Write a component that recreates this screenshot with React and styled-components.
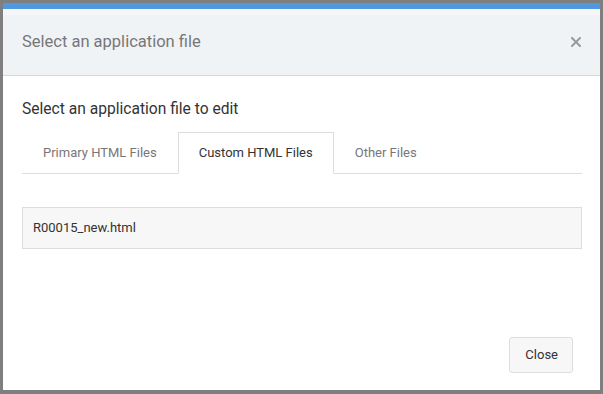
import React, { useState } from "react";
import styled, { createGlobalStyle } from "styled-components";

const Global = createGlobalStyle`
  html, body { margin: 0; padding: 0; }
  body {
    background: #7f7f7f;
    font-family: Roboto, "Liberation Sans", Arial, sans-serif;
  }
  * { box-sizing: border-box; }
`;

const Page = styled.div`
  width: 603px;
  height: 394px;
  padding: 3px 3px 4px 3px;
  display: flex;
`;

const Modal = styled.div`
  flex: 1;
  background: #fff;
  border-top: 6px solid #5098e2;
  display: flex;
  flex-direction: column;
`;

const Header = styled.div`
  height: 67px;
  background: #f0f3f6;
  box-shadow: inset 0 6px 0 #f4f6f8;
  border-bottom: 1px solid #d6d8db;
  display: flex;
  align-items: center;
  justify-content: space-between;
  padding: 0 18px 0 19px;
`;

const Title = styled.h4`
  margin: 0;
  font-size: 16.5px;
  font-weight: 400;
  line-height: 20px;
  color: #777;
`;

const CloseX = styled.button`
  border: 0;
  background: none;
  padding: 0;
  width: 12px;
  height: 12px;
  display: flex;
  align-items: center;
  justify-content: center;
  cursor: pointer;
`;

const Body = styled.div`
  flex: 1;
  padding: 23px 18px 0 19px;
  display: flex;
  flex-direction: column;
`;

const Heading = styled.div`
  font-size: 15.6px;
  line-height: 20px;
  color: #333;
`;

const TabList = styled.ul`
  list-style: none;
  margin: 13px 0 0 0;
  padding: 0;
  display: flex;
  border-bottom: 1px solid #ddd;
`;

const Tab = styled.li`
  padding: 10px 20px;
  font-size: 13px;
  line-height: 20px;
  margin-bottom: -1px;
  border: 1px solid ${(p) => (p.$active ? "#ddd" : "transparent")};
  border-bottom-color: ${(p) => (p.$active ? "#fff" : "transparent")};
  background: ${(p) => (p.$active ? "#fff" : "transparent")};
  color: ${(p) => (p.$active ? "#333" : "#777")};
  cursor: pointer;
`;

const FileList = styled.div`
  margin-top: 33px;
  display: flex;
  flex-direction: column;
`;

const FileItem = styled.div`
  padding: 10px 10px;
  font-size: 13px;
  line-height: 20px;
  color: #333;
  background: #f7f7f7;
  border: 1px solid #ddd;
`;

const Footer = styled.div`
  display: flex;
  justify-content: flex-end;
  padding: 0 27px 17px 0;
`;

const Button = styled.button`
  font-family: inherit;
  font-size: 13px;
  line-height: 20px;
  color: #333;
  background: #f7f7f7;
  border: 1px solid #ddd;
  border-radius: 3px;
  padding: 7px 14px 7px 15px;
  cursor: pointer;
`;

const tabs = ["Primary HTML Files", "Custom HTML Files", "Other Files"];

export default function App() {
  const [active, setActive] = useState(1);
  return (
    <>
      <Global />
      <Page>
        <Modal>
          <Header>
            <Title>Select an application file</Title>
            <CloseX aria-label="Close">
              <svg width="10" height="10" viewBox="0 0 10 10">
                <path d="M1 1L9 9M9 1L1 9" stroke="#9a9a9a" strokeWidth="2" strokeLinecap="square" />
              </svg>
            </CloseX>
          </Header>
          <Body>
            <Heading>Select an application file to edit</Heading>
            <TabList>
              {tabs.map((t, i) => (
                <Tab key={t} $active={i === active} onClick={() => setActive(i)}>
                  {t}
                </Tab>
              ))}
            </TabList>
            <FileList>
              <FileItem>R00015_new.html</FileItem>
            </FileList>
          </Body>
          <Footer>
            <Button>Close</Button>
          </Footer>
        </Modal>
      </Page>
    </>
  );
}
